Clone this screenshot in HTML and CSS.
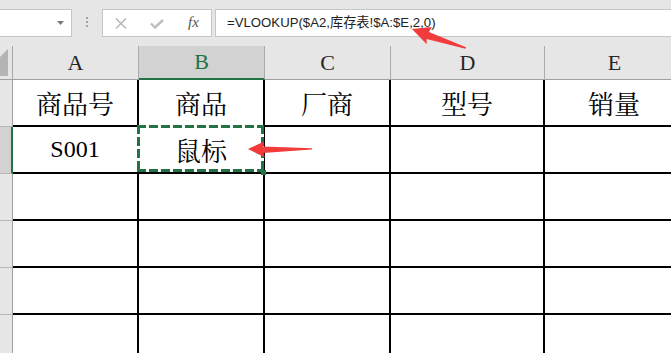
FILE: index.html
```html
<!DOCTYPE html>
<html lang="zh-CN">
<head>
    <meta charset="UTF-8">
    <meta name="viewport" content="width=device-width, initial-scale=1.0">
    <title>VLOOKUP</title>
    <link rel="stylesheet" href="styles.css">
</head>
<body>
    <div id="formula-bar">
        <div class="name-box">
            <svg width="7" height="4" viewBox="0 0 7 4"><polygon points="0,0 7,0 3.5,4" fill="#777"/></svg>
        </div>
        <div class="grip"><span></span><span></span><span></span></div>
        <div class="fx-buttons">
            <svg class="cancel" width="12" height="11" viewBox="0 0 12 11">
                <path d="M1 0.5 L11 10.5 M11 0.5 L1 10.5" stroke="#b4b4b4" stroke-width="1.4" fill="none"/>
            </svg>
            <svg class="confirm" width="14" height="10" viewBox="0 0 14 10">
                <path d="M1 4.5 L5 8.5 L13 1" stroke="#bdbdbd" stroke-width="2.4" fill="none"/>
            </svg>
            <span class="fx">fx</span>
        </div>
        <div class="formula-input">=VLOOKUP($A2,库存表!$A:$E,2,0)</div>
    </div>

    <div id="sheet">
        <div class="corner"><div class="select-all"></div></div>
        <div class="col-head">A</div>
        <div class="col-head active">B</div>
        <div class="col-head">C</div>
        <div class="col-head">D</div>
        <div class="col-head">E</div>

        <div class="row-head"></div>
        <div class="cell">商品号</div>
        <div class="cell">商品</div>
        <div class="cell">厂商</div>
        <div class="cell">型号</div>
        <div class="cell">销量</div>

        <div class="row-head active"></div>
        <div class="cell code">S001</div>
        <div class="cell selected">鼠标</div>
        <div class="cell"></div>
        <div class="cell"></div>
        <div class="cell"></div>

        <div class="row-head"></div>
        <div class="cell"></div>
        <div class="cell"></div>
        <div class="cell"></div>
        <div class="cell"></div>
        <div class="cell"></div>

        <div class="row-head"></div>
        <div class="cell"></div>
        <div class="cell"></div>
        <div class="cell"></div>
        <div class="cell"></div>
        <div class="cell"></div>

        <div class="row-head"></div>
        <div class="cell"></div>
        <div class="cell"></div>
        <div class="cell"></div>
        <div class="cell"></div>
        <div class="cell"></div>

        <div class="row-head"></div>
        <div class="cell"></div>
        <div class="cell"></div>
        <div class="cell"></div>
        <div class="cell"></div>
        <div class="cell"></div>
    </div>

    <!-- annotation arrows drawn over the screenshot -->
    <svg class="arrows" width="671" height="353" viewBox="0 0 671 353">
        <polygon transform="translate(412,29) rotate(19.4)" points="0,0 18,-8.5 17,-2.8 57,-0.8 57,0.8 17,4.5 19,9.5" fill="#f23b3b"/>
        <polygon transform="translate(248,149)" points="0,0 16,-7.5 15,-2.5 64,-0.8 64,0.6 15,4 17,8.5" fill="#f23b3b"/>
    </svg>
</body>
</html>
```

FILE: styles.css
```css
body {
    margin: 0;
    width: 671px;
    height: 353px;
    overflow: hidden;
    position: relative;
    background-color: #e6e6e6;
    font-family: "Liberation Sans", "Noto Sans CJK SC", sans-serif;
}
#formula-bar {
    display: flex;
    align-items: flex-start;
    height: 38px;
    padding-top: 9px;
    box-sizing: border-box;
}
.name-box {
    width: 73px;
    height: 28px;
    margin-left: -1px;
    box-sizing: border-box;
    background-color: #ffffff;
    border: 1px solid #c6c6c6;
    display: flex;
    align-items: center;
    justify-content: flex-end;
    padding-right: 7px;
}
.grip {
    display: flex;
    flex-direction: column;
    gap: 2px;
    margin-left: 14px;
    margin-top: 8px;
}
.grip span {
    width: 2px;
    height: 2px;
    background-color: #a3a3a3;
}
.fx-buttons {
    width: 110px;
    height: 28px;
    margin-left: 14px;
    box-sizing: border-box;
    background-color: #ffffff;
    border: 1px solid #c6c6c6;
    display: flex;
    align-items: center;
    padding-left: 12px;
}
.confirm {
    margin-left: 23px;
    margin-top: 1px;
}
.fx {
    margin-left: 24px;
    font-family: "Liberation Serif", serif;
    font-style: italic;
    font-size: 15px;
    color: #555555;
    margin-top: -1px;
}
.formula-input {
    flex: 1;
    height: 28px;
    margin-left: 3px;
    margin-right: -2px;
    box-sizing: border-box;
    background-color: #ffffff;
    border: 1px solid #c6c6c6;
    padding-left: 11px;
    font-size: 13.2px;
    line-height: 26px;
    color: #222222;
    white-space: nowrap;
}
#sheet {
    display: grid;
    grid-template-columns: 13px 126px 126px 126px 154px 140px;
    grid-template-rows: 34px repeat(6, 47px);
    margin-top: 8px;
}
.corner {
    position: relative;
    border-right: 1px solid #a8a8a8;
    border-bottom: 1px solid #9f9f9f;
}
.select-all {
    width: 8px;
    height: 27px;
    margin-top: 3px;
    background-color: #b4b4b4;
    clip-path: polygon(100% 0, 100% 100%, 0 100%, 0 30%);
}
.col-head {
    display: flex;
    align-items: center;
    justify-content: center;
    border-right: 1px solid #ababab;
    border-bottom: 1px solid #9f9f9f;
    font-family: "Liberation Serif", serif;
    font-size: 22px;
    color: #262626;
}
.col-head.active {
    background-color: #d2d2d2;
    color: #217346;
    border-bottom: 2px solid #217346;
}
.row-head {
    border-right: 1px solid #a0a0a0;
    border-bottom: 1px solid #b8b8b8;
}
.row-head.active {
    background-color: #d2d2d2;
    border-right: 2px solid #217346;
}
.cell {
    display: flex;
    align-items: center;
    justify-content: center;
    background-color: #ffffff;
    border-right: 2px solid #000000;
    border-bottom: 2px solid #000000;
    font-family: "Liberation Serif", "Noto Serif CJK SC", "Noto Sans CJK SC", serif;
    font-size: 26px;
    color: #000000;
}
.cell.code {
    font-size: 24px;
}
.cell.selected {
    position: relative;
}
.cell.selected::after {
    content: "";
    position: absolute;
    top: -2px;
    left: -2px;
    right: -1px;
    bottom: 0;
    background:
        repeating-linear-gradient(90deg, #217346 0 9px, #ffffff 9px 12px) top / 100% 3px no-repeat,
        repeating-linear-gradient(90deg, #217346 0 9px, #ffffff 9px 12px) bottom / 100% 3px no-repeat,
        repeating-linear-gradient(180deg, #217346 0 9px, #ffffff 9px 12px) left / 3px 100% no-repeat,
        repeating-linear-gradient(180deg, #217346 0 9px, #ffffff 9px 12px) right / 3px 100% no-repeat;
}
.cell.selected::before {
    content: "";
    position: absolute;
    right: -3px;
    bottom: -3px;
    width: 5px;
    height: 5px;
    background-color: #217346;
    z-index: 1;
}
.arrows {
    position: absolute;
    top: 0;
    left: 0;
    pointer-events: none;
}
```
